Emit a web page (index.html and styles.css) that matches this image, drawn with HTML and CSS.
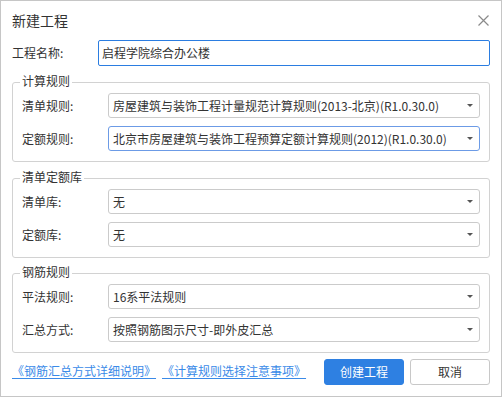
FILE: index.html
```html
<!DOCTYPE html>
<html lang="zh-CN">
<head>
<meta charset="utf-8">
<title>新建工程</title>
<link rel="stylesheet" href="styles.css">
</head>
<body>
<div class="dialog">
  <div class="header">
    <span class="title">新建工程</span>
    <svg class="close" width="11" height="11" viewBox="0 0 11 11"><path d="M0.5 0.5 L10.5 10.5 M10.5 0.5 L0.5 10.5" stroke="#8a8a8a" stroke-width="1.2" fill="none"/></svg>
  </div>
  <div class="name-row">
    <span class="label">工程名称:</span>
    <div class="input">启程学院综合办公楼</div>
  </div>

  <fieldset class="group">
    <legend>计算规则</legend>
    <div class="row">
      <span class="label">清单规则:</span>
      <div class="select"><span class="value">房屋建筑与装饰工程计量规范计算规则(2013-北京)(R1.0.30.0)</span><span class="arrow"></span></div>
    </div>
    <div class="row">
      <span class="label">定额规则:</span>
      <div class="select focus"><span class="value">北京市房屋建筑与装饰工程预算定额计算规则(2012)(R1.0.30.0)</span><span class="arrow"></span></div>
    </div>
  </fieldset>

  <fieldset class="group">
    <legend>清单定额库</legend>
    <div class="row">
      <span class="label">清单库:</span>
      <div class="select"><span class="value">无</span><span class="arrow"></span></div>
    </div>
    <div class="row">
      <span class="label">定额库:</span>
      <div class="select"><span class="value">无</span><span class="arrow"></span></div>
    </div>
  </fieldset>

  <fieldset class="group last">
    <legend>钢筋规则</legend>
    <div class="row">
      <span class="label">平法规则:</span>
      <div class="select"><span class="value">16系平法规则</span><span class="arrow"></span></div>
    </div>
    <div class="row">
      <span class="label">汇总方式:</span>
      <div class="select"><span class="value">按照钢筋图示尺寸-即外皮汇总</span><span class="arrow"></span></div>
    </div>
  </fieldset>

  <div class="footer">
    <div class="links">
      <a class="link" href="#">《钢筋汇总方式详细说明》</a>
      <a class="link" href="#">《计算规则选择注意事项》</a>
    </div>
    <div class="buttons">
      <button class="btn primary">创建工程</button>
      <button class="btn">取消</button>
    </div>
  </div>
</div>
</body>
</html>
```

FILE: styles.css
```css
html, body {
  margin: 0;
  padding: 0;
  background: #ffffff;
}

body {
  font-family: "Noto Sans CJK SC", "Noto Sans", sans-serif;
  font-size: 12px;
  color: #333333;
}

.dialog {
  box-sizing: border-box;
  width: 502px;
  height: 397px;
  border: 1px solid #c6c6c6;
  padding: 0 11px;
  background: #ffffff;
}

.header {
  display: flex;
  justify-content: space-between;
  align-items: center;
  height: 20px;
  padding-top: 9px;
}

.title {
  font-size: 14px;
  line-height: 20px;
}

.close {
  display: block;
  margin-right: 1px;
}

.name-row {
  display: flex;
  align-items: center;
  margin-top: 10px;
  height: 26px;
}

.label {
  flex: 0 0 86px;
  line-height: 16px;
}

.input {
  box-sizing: border-box;
  flex: 1;
  height: 26px;
  border: 1px solid #2b7de1;
  border-radius: 2px;
  padding: 0 3px;
  line-height: 24px;
  color: #333;
}

.group {
  margin: 7px 0 0 0;
  padding: 2px 9px 10px 9px;
  border: 1px solid #d2d2d2;
  border-radius: 3px;
  min-inline-size: 0;
}

.group.last {
  margin-top: 6px;
}

.group legend {
  margin-left: -2px;
  padding: 0 2px 2px 2px;
  line-height: 16px;
  font-size: 12px;
}

.row {
  display: flex;
  align-items: center;
  height: 25px;
}

.row + .row {
  margin-top: 8px;
}

.select {
  box-sizing: border-box;
  flex: 1;
  height: 25px;
  display: flex;
  align-items: center;
  border: 1px solid #cbcbcb;
  border-radius: 3px;
  padding: 0 6px 0 4px;
}

.select.focus {
  border-color: #6c9be6;
}

.value {
  flex: 1;
  line-height: 16px;
  white-space: nowrap;
}

.arrow {
  width: 0;
  height: 0;
  border-left: 3px solid transparent;
  border-right: 3px solid transparent;
  border-top: 3px solid #555555;
}

.footer {
  display: flex;
  justify-content: space-between;
  align-items: center;
  margin-top: 6px;
  height: 26px;
}

.links {
  display: flex;
  gap: 6px;
  padding-bottom: 2px;
}

.link {
  color: #3a8ae8;
  text-decoration: underline;
  text-underline-offset: 2px;
  line-height: 16px;
}

.buttons {
  display: flex;
  gap: 6px;
}

.btn {
  box-sizing: border-box;
  width: 80px;
  height: 26px;
  border: 1px solid #c8c8c8;
  border-radius: 3px;
  background: #ffffff;
  color: #333333;
  font-family: "Noto Sans CJK SC", "Noto Sans", sans-serif;
  font-size: 12px;
  padding: 0;
  line-height: 24px;
}

.btn.primary {
  background: #2e80e2;
  border-color: #2e80e2;
  color: #ffffff;
}
```
